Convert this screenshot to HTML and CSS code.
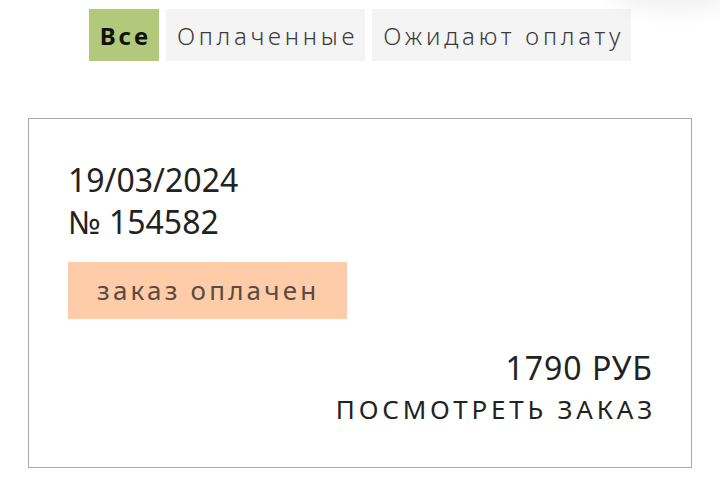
FILE: index.html
```html
<!DOCTYPE html>
<html lang="ru">
<head>
    <meta charset="UTF-8">
    <meta name="viewport" content="width=device-width, initial-scale=1.0">
    <title>Мои заказы</title>
    <link rel="stylesheet" href="styles.css">
</head>
<body>
    <div class="corner-shadow"></div>
    <div class="tabs">
        <button class="tab active">Все</button>
        <button class="tab">Оплаченные</button>
        <button class="tab">Ожидают оплату</button>
    </div>

    <div class="order">
        <div class="order-date">19/03/2024</div>
        <div class="order-number">№ 154582</div>
        <div class="status paid">заказ оплачен</div>
        <div class="order-bottom">
            <div class="price">1790 РУБ</div>
            <a href="#" class="details">ПОСМОТРЕТЬ ЗАКАЗ</a>
        </div>
    </div>
</body>
</html>
```

FILE: styles.css
```css
body {
    font-family: "Noto Sans", "DejaVu Sans", sans-serif;
    margin: 0;
    background: #fff;
    color: #222;
    overflow: hidden;
}
.corner-shadow {
    position: absolute;
    top: -40px;
    right: -20px;
    width: 130px;
    height: 50px;
    border-radius: 50%;
    background: rgba(0,0,0,0.06);
    filter: blur(10px);
}
.tabs {
    display: flex;
    justify-content: center;
    gap: 7px;
    padding-top: 9px;
}
.tab {
    font-family: inherit;
    font-size: 24px;
    font-weight: 300;
    letter-spacing: 3.8px;
    color: #3a3a3a;
    background: #f5f4f4;
    border: none;
    height: 52px;
    padding: 0 7px 0 11px;
    cursor: pointer;
}
.tab.active {
    background: #b2c97b;
    font-weight: bold;
    letter-spacing: 3px;
    padding: 0 8px 0 11px;
    color: #111;
}
.order {
    margin: 57px 28px 0;
    border: 1px solid #aaa;
    padding: 40px 39px 40px;
}
.order-date,
.order-number {
    font-size: 32px;
    line-height: 42px;
}
.status {
    display: inline-block;
    margin-top: 19px;
    padding: 0 28px 0 29px;
    height: 57px;
    line-height: 57px;
    font-size: 26px;
    letter-spacing: 3.2px;
    color: #5a4a40;
}
.status.paid {
    background: #fecca8;
}
.order-bottom {
    text-align: right;
    margin-top: 30px;
}
.price {
    font-size: 32px;
    line-height: 38px;
    letter-spacing: 1px;
    margin-right: -1px;
}
.details {
    display: block;
    margin-top: 4px;
    margin-right: -4px;
    font-size: 26px;
    line-height: 36px;
    letter-spacing: 3.8px;
    color: #222;
    text-decoration: none;
}
```
